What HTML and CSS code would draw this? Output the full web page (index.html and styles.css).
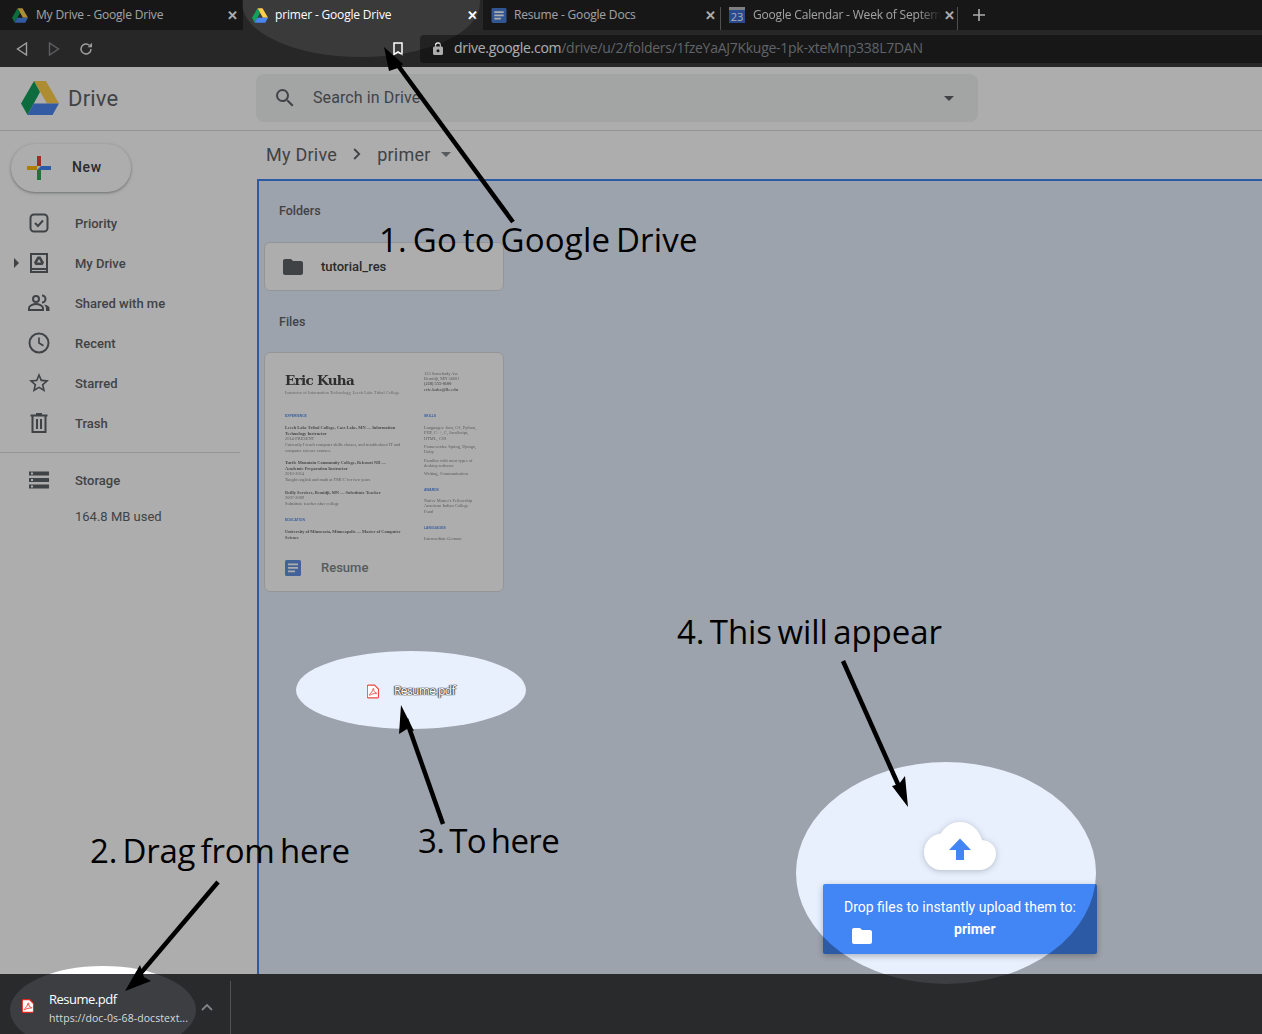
FILE: index.html
```html
<!DOCTYPE html>
<html lang="en">
<head>
<meta charset="utf-8">
<title>primer - Google Drive</title>
<link rel="stylesheet" href="styles.css">
</head>
<body>
<svg class="defs" width="0" height="0" aria-hidden="true">
  <defs>
    <symbol id="drive" viewBox="0 0 38 34">
      <path fill="#ffcf4a" d="M13 0h12l13 22.5H26z"/>
      <path fill="#12a05c" d="M13 0l6 11L6.500 34 0 22.500z"/>
      <path fill="#4a86f0" d="M12.700 22.500H38L31.500 34h-25z"/>
    </symbol>
    <symbol id="pdf" viewBox="0 0 14 16">
      <path fill="#fff" stroke="currentColor" stroke-width="1.300" d="M1.600.6h7.200l4.600 4.600v8.900a1.300 1.300 0 0 1-1.300 1.300H1.600a1.300 1.300 0 0 1-1.300-1.300V1.900A1.300 1.300 0 0 1 1.600.6z"/>
      <path fill="none" stroke="currentColor" stroke-width="1" d="M7 4.800c-.6 2.700-2 5-4.300 6.700-.6.500 0 1.100.7.700 2.400-1.400 5-2 7.500-1.700.8 0 .8-.8 0-.9-2.300-.3-3.500-2.200-3-4.700.1-.6-.8-.7-.9-.1z"/>
    </symbol>
    <symbol id="folder" viewBox="2 4 20 16">
      <path fill="currentColor" d="M10 4H4c-1.100 0-2 .9-2 2v12c0 1.100.9 2 2 2h16c1.100 0 2-.9 2-2V8c0-1.100-.9-2-2-2h-8l-2-2z"/>
    </symbol>
    <symbol id="doc" viewBox="0 0 16 16">
      <rect width="16" height="16" rx="1.500" fill="#4a7fd8"/>
      <path fill="#fff" d="M3 3.500h10v1.800H3zM3 7h10v1.800H3zM3 10.500h7v1.800H3z"/>
    </symbol>
    <mask id="holes" maskUnits="userSpaceOnUse" x="0" y="0" width="1262" height="1034">
      <rect width="1262" height="1034" fill="#fff"/>
      <ellipse cx="361" cy="3" rx="119" ry="54" fill="#000"/>
      <ellipse cx="411" cy="690" rx="115" ry="39" fill="#000"/>
      <ellipse cx="946" cy="873" rx="150" ry="111" fill="#000"/>
      <ellipse cx="103" cy="1010" rx="93" ry="44" fill="#000"/>
    </mask>
  </defs>
</svg>

<div class="page">
  <header class="tabstrip">
    <div class="tab">
      <svg class="favicon"><use href="#drive"/></svg>
      <span class="tab-title">My Drive - Google Drive</span>
      <span class="tab-close">✕</span>
    </div>
    <div class="tab tab-active">
      <svg class="favicon"><use href="#drive"/></svg>
      <span class="tab-title">primer - Google Drive</span>
      <span class="tab-close">✕</span>
    </div>
    <div class="tab tab-sep">
      <svg class="favicon"><use href="#doc"/></svg>
      <span class="tab-title">Resume - Google Docs</span>
      <span class="tab-close">✕</span>
    </div>
    <div class="tab tab-sep tab-cal">
      <span class="cal-icon">23</span>
      <span class="tab-title tab-fade">Google Calendar - Week of Septem</span>
      <span class="tab-close">✕</span>
    </div>
    <span class="new-tab">
      <svg width="12" height="12" viewBox="0 0 12 12"><path fill="none" stroke="currentColor" stroke-width="1.600" d="M6 0v12M0 6h12"/></svg>
    </span>
  </header>

  <nav class="toolbar">
    <svg class="tool" width="12" height="14" viewBox="0 0 12 14"><path fill="none" stroke="#e8eaed" stroke-width="1.400" d="M10.500 1v12L1.500 7z"/></svg>
    <svg class="tool tool-off" width="12" height="14" viewBox="0 0 12 14"><path fill="none" stroke="#8a8c90" stroke-width="1.400" d="M1.500 1v12l9-6z"/></svg>
    <svg class="tool" width="14" height="14" viewBox="0 0 14 14"><path fill="none" stroke="#e8eaed" stroke-width="1.500" d="M12 7a5 5 0 1 1-1.600-3.700"/><path fill="#e8eaed" d="M13 .8v4.400H8.600z"/></svg>
    <svg class="bookmark" width="10" height="14" viewBox="0 0 10 14"><path fill="none" stroke="#fff" stroke-width="1.500" d="M1 1h8v11.500L5 10l-4 2.500z"/></svg>
    <div class="omnibox">
      <svg class="lock" width="10" height="13" viewBox="0 0 10 13"><path fill="#fff" d="M8.500 4.500H8V3.200a3 3 0 0 0-6 0v1.300h-.5C.7 4.500 0 5.200 0 6v5.500C0 12.300.7 13 1.500 13h7c.8 0 1.500-.7 1.500-1.500V6c0-.8-.7-1.500-1.500-1.500zM3.200 3.200a1.800 1.800 0 0 1 3.600 0v1.300H3.200zM5 10.300a1.500 1.500 0 1 1 0-3 1.500 1.500 0 0 1 0 3z"/></svg>
      <span class="url"><span class="url-host">drive.google.com</span>/drive/u/2/folders/1fzeYaAJ7Kkuge-1pk-xteMnp338L7DAN</span>
    </div>
  </nav>

  <div class="app">
    <div class="app-header">
      <div class="brand">
        <svg class="logo"><use href="#drive"/></svg>
        <span class="brand-name">Drive</span>
      </div>
      <div class="search">
        <svg class="search-icon" width="24" height="24" viewBox="0 0 24 24"><path fill="#5f6368" d="M15.500 14h-.79l-.28-.27A6.470 6.470 0 0 0 16 9.500 6.500 6.500 0 1 0 9.500 16c1.610 0 3.090-.59 4.230-1.570l.27.28v.79l5 4.990L20.490 19l-4.990-5zm-6 0C7.010 14 5 11.990 5 9.500S7.010 5 9.500 5 14 7.010 14 9.500 11.990 14 9.500 14z"/></svg>
        <span class="search-text">Search in Drive</span>
        <span class="caret search-caret"></span>
      </div>
    </div>

    <div class="app-body">
      <aside class="sidebar">
        <button class="new-btn">
          <svg width="24" height="24" viewBox="0 0 24 24">
            <path fill="#ea4335" d="M10 0h4v10h-4z"/>
            <path fill="#4285f4" d="M14 10h10v4H14z"/>
            <path fill="#34a853" d="M10 14h4v10h-4z"/>
            <path fill="#fbbc05" d="M0 10h10v4H0z"/>
            <path fill="#4285f4" d="M10 14l4-4v4z"/>
          </svg>
          <span>New</span>
        </button>
        <ul class="nav">
          <li class="nav-item">
            <svg class="nav-icon" viewBox="0 0 24 24"><rect x="3.500" y="3.500" width="17" height="17" rx="3.500" fill="none" stroke="#5f6368" stroke-width="2"/><path fill="none" stroke="#5f6368" stroke-width="2" d="M8 12l3 3 5-5.500"/></svg>
            <span>Priority</span>
          </li>
          <li class="nav-item">
            <span class="nav-arrow"></span>
            <svg class="nav-icon" viewBox="0 0 24 24"><path fill="#5f6368" d="M3 2h18v20H3zm2 2v13h14V4zm0 15v1h14v-1z"/><path fill="#5f6368" d="M10.500 5.500h3l3.500 6-1.500 2.500h-7L7 11.500zm1.500 2.500l-2 3.500h4z"/></svg>
            <span>My Drive</span>
          </li>
          <li class="nav-item">
            <svg class="nav-icon" viewBox="0 0 24 24"><circle cx="9" cy="8" r="3" fill="none" stroke="#5f6368" stroke-width="2"/><path fill="none" stroke="#5f6368" stroke-width="2" d="M2 19v-2c0-2.500 4.500-4 7-4s7 1.500 7 4v2z"/><path fill="none" stroke="#5f6368" stroke-width="2" d="M15 4.500a3.500 3.500 0 0 1 0 7"/><path fill="#5f6368" d="M17 13.500c2.500.5 5.500 1.500 5.500 3.500v3h-3.500v-3c0-1.300-1.200-2.500-2-3.500z"/></svg>
            <span>Shared with me</span>
          </li>
          <li class="nav-item">
            <svg class="nav-icon" viewBox="0 0 24 24"><circle cx="12" cy="12" r="9.500" fill="none" stroke="#5f6368" stroke-width="2"/><path fill="none" stroke="#5f6368" stroke-width="1.700" d="M12 6.500V12l4.500 2.700"/></svg>
            <span>Recent</span>
          </li>
          <li class="nav-item">
            <svg class="nav-icon" viewBox="0 0 24 24"><path fill="#5f6368" d="M22 9.240l-7.190-.62L12 2 9.190 8.630 2 9.240l5.460 4.730L5.820 21 12 17.270 18.180 21l-1.630-7.030L22 9.240zM12 15.400l-3.760 2.270 1-4.280-3.320-2.880 4.380-.38L12 6.100l1.710 4.040 4.380.38-3.320 2.880 1 4.280L12 15.400z"/></svg>
            <span>Starred</span>
          </li>
          <li class="nav-item">
            <svg class="nav-icon" viewBox="0 0 24 24"><path fill="#5f6368" d="M9 2h6v1.500h5.500v2h-1V22h-15V5.500h-1v-2H9zM6.500 5.500V20h11V5.500zM9 8h2v10H9zm4 0h2v10h-2z"/></svg>
            <span>Trash</span>
          </li>
        </ul>
        <div class="side-divider"></div>
        <div class="nav-item storage">
          <svg class="nav-icon" viewBox="0 0 24 24"><path fill="#5f6368" d="M2 20.500h20v-4H2zm2-3h2v2H4zM2 3.500v4h20v-4zm4 3H4v-2h2zM2 14h20v-4H2zm2-3h2v2H4z"/></svg>
          <span>Storage</span>
        </div>
        <div class="used">164.8 MB used</div>
      </aside>

      <main class="content">
        <div class="crumbs">
          <span>My Drive</span>
          <svg class="crumb-chevron" width="8" height="12" viewBox="0 0 8 12"><path fill="none" stroke="#5f6368" stroke-width="1.800" d="M1.200 1l5 5-5 5"/></svg>
          <span>primer</span>
          <span class="caret crumb-caret"></span>
        </div>
        <section class="pane">
          <h2 class="section-title">Folders</h2>
          <div class="folder-card">
            <svg class="folder-icon"><use href="#folder"/></svg>
            <span>tutorial_res</span>
          </div>
          <h2 class="section-title files-title">Files</h2>
          <div class="file-card">
            <div class="preview">
              <div class="pv-left">
                <div class="pv-name">Eric Kuha</div>
                <div class="pv-sub">Instructor of Information Technology, Leech Lake Tribal College</div>
                <div class="pv-head pv-first">EXPERIENCE</div>
                <div class="pv-strong">Leech Lake Tribal College, Cass Lake, MN — Information<br>Technology Instructor</div>
                <div class="pv-text">2014-PRESENT</div>
                <div class="pv-text">Currently I teach computer skills classes, and troubleshoot IT and<br>computer science courses.</div>
                <div class="pv-strong pv-gap">Turtle Mountain Community College, Belcourt ND —<br>Academic Preparation Instructor</div>
                <div class="pv-text">2010-2014</div>
                <div class="pv-text">Taught english and math at TMCC for two years</div>
                <div class="pv-strong pv-gap">Reilly Services, Bemidji, MN — Substitute Teacher</div>
                <div class="pv-text">2007-2009</div>
                <div class="pv-text">Substitute teacher after college</div>
                <div class="pv-head pv-edu">EDUCATION</div>
                <div class="pv-strong">University of Minnesota, Minneapolis — Master of Computer<br>Science</div>
              </div>
              <div class="pv-right">
                <div class="pv-contact">123 Somebody Ave<br>Bemidji, MN 56601<br><b>(218) 555-0100</b><br><b>eric.kuha@llc.edu</b></div>
                <div class="pv-head pv-skills">SKILLS</div>
                <div class="pv-text">Languages: Java, C#, Python,<br>PHP, C++, C, JavaScript,<br>HTML, CSS</div>
                <div class="pv-text pv-fw">Frameworks: Spring, Django,<br>Unity</div>
                <div class="pv-text pv-fam">Familiar with most types of<br>desktop software</div>
                <div class="pv-text pv-wr">Writing, Communication</div>
                <div class="pv-head pv-awards">AWARDS</div>
                <div class="pv-text">Native Master's Fellowship<br>American Indian College<br>Fund</div>
                <div class="pv-head pv-lang">LANGUAGES</div>
                <div class="pv-text">Intermediate German</div>
              </div>
            </div>
            <div class="file-foot">
              <svg class="doc-icon"><use href="#doc"/></svg>
              <span>Resume</span>
            </div>
          </div>
        </section>
      </main>
    </div>
  </div>

  <footer class="download-bar">
    <svg class="dl-icon"><use href="#pdf"/></svg>
    <div class="dl-info">
      <div class="dl-name">Resume.pdf</div>
      <div class="dl-url">https://doc-0s-68-docstext...</div>
    </div>
    <svg class="dl-chevron" width="12" height="7" viewBox="0 0 12 7"><path fill="none" stroke="#bdc1c6" stroke-width="1.800" d="M1 6l5-5 5 5"/></svg>
    <span class="dl-sep"></span>
  </footer>
</div>

<div class="upload-widget">
  <svg class="cloud" width="72" height="48" viewBox="0 0 72 48">
    <path fill="#fff" d="M58 18.100C55.300 7.700 46.400 0 36 0 27.700 0 20.500 4.700 16.900 11.600 7.400 12.600 0 20.600 0 30.400 0 40.100 7.900 48 17.500 48h37.900C64.600 48 72 40.600 72 31.500c0-7-5.700-12.800-14-13.400z"/>
    <path fill="#4285f4" d="M36 16.500L47 28h-7v10h-8V28h-7z"/>
  </svg>
  <div class="upload-card">
    <p class="upload-line">Drop files to instantly upload them to:</p>
    <div class="upload-target">
      <svg class="upload-folder"><use href="#folder"/></svg>
      <strong>primer</strong>
    </div>
  </div>
</div>

<svg class="dim" width="1262" height="1034" viewBox="0 0 1262 1034" aria-hidden="true">
  <rect width="1262" height="1034" fill="#000" fill-opacity=".32" mask="url(#holes)"/>
  <g fill="none" stroke="#000" stroke-width="4.500">
    <path d="M513 222L394 60"/>
    <path d="M218 882L134 981"/>
    <path d="M443 824L406 719"/>
    <path d="M843 661L901 791"/>
  </g>
  <g fill="#000">
    <path d="M384 47L403 64 398 68 389 71z"/>
    <path d="M125 991L140 965 144 977 151 981z"/>
    <path d="M401 705L414 731 407 729 399 734z"/>
    <path d="M908 807L892 786 899 784 905 776z"/>
  </g>
</svg>

<div class="ghost">
  <svg class="ghost-icon"><use href="#pdf"/></svg>
  <span>Resume.pdf</span>
</div>

<p class="note note-1">1. Go to Google Drive</p>
<p class="note note-2">2. Drag from here</p>
<p class="note note-3">3. To here</p>
<p class="note note-4">4. This will appear</p>
</body>
</html>
```

FILE: styles.css
```css
* { box-sizing: border-box; }

html, body {
  margin: 0;
  height: 1034px;
  overflow: hidden;
}

body {
  position: relative;
  font-family: Roboto, "Liberation Sans", sans-serif;
  background: #fff;
}

.defs { position: absolute; }

.page {
  display: flex;
  flex-direction: column;
  width: 1262px;
  height: 1034px;
}

/* browser tabs */
.tabstrip {
  display: flex;
  align-items: stretch;
  flex: 0 0 30px;
  background: #222;
  color: #eceef0;
  font: 12px/30px "Open Sans", sans-serif;
}

.tab {
  display: flex;
  align-items: center;
  flex: 0 0 243px;
  min-width: 0;
  padding: 0 5px 0 12px;
  position: relative;
}

.tab-active {
  flex-basis: 240px;
  padding-left: 9px;
  background: #3a3a3a;
  color: #fff;
}

.tab-sep { flex-basis: 238px; padding-left: 8px; }

.tab-cal { flex-basis: 237px; }

.tab-sep::after {
  content: "";
  position: absolute;
  right: 0;
  top: 7px;
  bottom: 0;
  width: 1px;
  background: #777;
}

.favicon {
  flex: none;
  width: 16px;
  height: 15px;
  margin-right: 8px;
}

.tab-active .favicon { margin-right: 7px; }

.tab-sep .favicon { margin-right: 7px; }

.tab-title {
  flex: 1;
  min-width: 0;
  white-space: nowrap;
  overflow: hidden;
  letter-spacing: -.18px;
}

.tab-fade {
  flex: 0 0 auto;
  -webkit-mask-image: linear-gradient(to right, #000 88%, transparent 100%);
  mask-image: linear-gradient(to right, #000 88%, transparent 100%);
}

.tab-close {
  flex: none;
  width: 12px;
  font-size: 13px;
  font-weight: 700;
  text-align: center;
  color: #fff;
}

.tab-cal .tab-close { margin-left: auto; margin-right: -2px; }

.cal-icon {
  flex: none;
  width: 16px;
  height: 16px;
  margin-right: 8px;
  border-top: 3px solid #bbb;
  background: #3a6fd0;
  color: #fff;
  font: 11px/13px "Open Sans", sans-serif;
  text-align: center;
}

.new-tab {
  display: flex;
  align-items: center;
  margin-left: 15px;
  color: #fff;
}

/* browser toolbar */
.toolbar {
  display: flex;
  align-items: center;
  flex: 0 0 37px;
  padding-left: 16px;
  background: #3a3a3a;
}

.tool { flex: none; margin-right: 20px; }

.tool-off { margin-right: 19px; }

.bookmark { margin-left: 280px; flex: none; margin-right: 17px; }

.omnibox {
  display: flex;
  align-items: center;
  flex: 1;
  height: 28px;
  padding-left: 13px;
  border-radius: 4px 0 0 4px;
  background: #222;
}

.lock { flex: none; margin-right: 11px; }

.url {
  margin-bottom: 2px;
  font: 14px/26px "Open Sans", sans-serif;
  letter-spacing: -.27px;
  color: #8f949a;
  white-space: nowrap;
}

.url-host { color: #fff; }

/* drive */
.app {
  display: flex;
  flex-direction: column;
  flex: 1;
  min-height: 0;
  background: #fff;
}

.app-header {
  display: flex;
  align-items: center;
  flex: 0 0 64px;
  padding-bottom: 1px;
  border-bottom: 1px solid #dadce0;
}

.brand {
  display: flex;
  align-items: center;
  flex: 0 0 235px;
  margin-left: 21px;
  color: #5f6368;
}

.logo { width: 38px; height: 34px; margin-right: 9px; }

.brand-name { font-size: 22px; letter-spacing: .2px; }

.search {
  display: flex;
  align-items: center;
  width: 722px;
  height: 48px;
  padding: 0 24px 0 17px;
  border-radius: 8px;
  background: #f1f3f4;
  color: #5f6368;
}

.search-text {
  flex: 1;
  margin-left: 16px;
  padding-bottom: 2px;
  font-size: 16px;
  letter-spacing: .1px;
}

.caret {
  display: inline-block;
  border-style: solid;
  border-width: 5px 5px 0;
  border-color: #5f6368 transparent transparent;
}

.app-body {
  display: flex;
  flex: 1;
  min-height: 0;
}

.sidebar {
  flex: 0 0 257px;
  padding-top: 13px;
  color: #5f6368;
}

.new-btn {
  display: flex;
  align-items: center;
  width: 120px;
  height: 48px;
  margin-left: 11px;
  padding: 0 0 0 16px;
  border: 0;
  border-radius: 24px;
  background: #fff;
  box-shadow: 0 1px 2px rgba(60,64,67,.3), 0 1px 3px 1px rgba(60,64,67,.15);
  color: #3c4043;
  font: 500 14px Roboto, sans-serif;
  letter-spacing: .6px;
}

.new-btn span { margin: 0 0 2px 21px; }

.nav {
  list-style: none;
  margin: 11px 0 0;
  padding: 0;
}

.nav-item {
  display: flex;
  align-items: center;
  position: relative;
  height: 40px;
  padding-left: 27px;
  font-size: 13px;
  font-weight: 500;
}

.nav-icon {
  flex: none;
  width: 24px;
  height: 24px;
  margin-right: 24px;
}

.nav-arrow {
  position: absolute;
  left: 14px;
  top: 15px;
  border-style: solid;
  border-width: 5px 0 5px 5px;
  border-color: transparent transparent transparent #5f6368;
}

.side-divider {
  width: 240px;
  height: 1px;
  margin-top: 9px;
  background: #dadce0;
}

.storage { margin-top: 7px; }

.used {
  margin-top: 7px;
  padding-left: 75px;
  font-size: 13px;
  line-height: 20px;
}

.content {
  display: flex;
  flex-direction: column;
  flex: 1;
  min-width: 0;
}

.crumbs {
  display: flex;
  align-items: center;
  flex: 0 0 48px;
  padding: 0 0 2px 9px;
  color: #5f6368;
  font-size: 18px;
  letter-spacing: .25px;
}

.crumb-chevron { margin: 0 16px 0 16px; }

.crumb-caret { margin-left: 10px; border-top-color: #80868b; }

.pane {
  flex: 1;
  border-top: 2px solid #4285f4;
  border-left: 2px solid #4285f4;
  background: #e8f0fe;
  padding: 20px 0 0 5px;
}

.section-title {
  margin: 0 0 0 15px;
  color: #5f6368;
  font-size: 12.500px;
  line-height: 20px;
  font-weight: 500;
}

.files-title { margin-top: 21px; }

.folder-card {
  display: flex;
  align-items: center;
  width: 240px;
  height: 49px;
  margin-top: 21px;
  padding-left: 18px;
  border: 1px solid #dadce0;
  border-radius: 6px;
  background: #fff;
  color: #3c4043;
  font-size: 13px;
  font-weight: 500;
}

.folder-icon {
  width: 20px;
  height: 16px;
  margin-right: 18px;
  color: #5f6368;
}

.file-card {
  display: flex;
  flex-direction: column;
  width: 240px;
  height: 240px;
  margin-top: 20px;
  border: 1px solid #dadce0;
  border-radius: 6px;
  background: #fff;
  color: #5f6368;
}

.preview {
  display: grid;
  grid-template-columns: 128px 62px;
  column-gap: 11px;
  flex: 1;
  min-height: 0;
  padding: 18px 0 0 20px;
  overflow: hidden;
  filter: blur(.5px);
  font-family: "Liberation Serif", serif;
  font-size: 4.400px;
  line-height: 5.600px;
  color: #8a8a8a;
  white-space: nowrap;
}

.pv-name {
  color: #444;
  font: 700 13.500px/18px "DejaVu Serif", serif;
  letter-spacing: -.7px;
}

.pv-sub { margin-top: 1.200px; color: #999; }

.pv-head { color: #5a8fe8; font-family: "Liberation Sans", sans-serif; font-size: 3.400px; font-weight: 700; }

.pv-first { margin-top: 18.400px; margin-bottom: 5.400px; }

.pv-strong { color: #707070; font-weight: 700; }

.pv-text { color: #8a8a8a; }

.pv-gap { margin-top: 7px; }

.pv-edu { margin-top: 11.600px; margin-bottom: 5.500px; }

.pv-contact { line-height: 5.200px; }

.pv-skills { margin-top: 22.400px; margin-bottom: 5px; }

.pv-fw { margin-top: 2px; }

.pv-fam { margin-top: 2.800px; }

.pv-wr { margin-top: 1.800px; }

.pv-awards { margin-top: 11.400px; margin-bottom: 4.400px; }

.pv-lang { margin-top: 12.200px; margin-bottom: 4.400px; }

.file-foot {
  display: flex;
  align-items: center;
  flex: 0 0 39px;
  padding: 0 0 8px 20px;
  color: #80868b;
  font-size: 13px;
  font-weight: 500;
}

.doc-icon {
  width: 16px;
  height: 16px;
  margin-right: 20px;
  opacity: .85;
}

/* download shelf */
.download-bar {
  display: flex;
  align-items: center;
  flex: 0 0 60px;
  padding-left: 22px;
  background: #3c3e42;
  color: #fff;
}

.dl-icon {
  width: 12px;
  height: 14px;
  margin: 4px 15px 0 0;
  color: #e8281e;
}

.dl-info { width: 139px; padding-top: 10px; }

.dl-name {
  font: 13px/16px "Open Sans", sans-serif;
  letter-spacing: -.5px;
}

.dl-url {
  margin-top: 2px;
  font: 10.500px/19px "Open Sans", sans-serif;
  letter-spacing: .08px;
  color: #d8dadd;
  white-space: nowrap;
}

.dl-chevron { margin: 6px 0 0 13px; }

.dl-sep {
  width: 1px;
  height: 53px;
  margin: 7px 0 0 17px;
  background: #7a7b7e;
}

/* overlays */
.upload-widget {
  position: absolute;
  left: 823px;
  top: 822px;
  width: 274px;
  color: #fff;
}

.cloud {
  display: block;
  margin-left: 101px;
  filter: drop-shadow(0 1px 3px rgba(60,64,67,.3));
}

.upload-card {
  height: 70px;
  margin-top: 14px;
  padding: 14px 21px 0;
  border-radius: 2px;
  background: #4285f4;
  box-shadow: 0 2px 6px rgba(60,64,67,.35);
  font-size: 14px;
}

.upload-line {
  margin: 0;
  line-height: 18px;
  white-space: nowrap;
}

.upload-target {
  display: flex;
  margin-top: 4px;
  line-height: 18px;
}

.upload-target strong { margin-left: 82px; font-weight: 700; }

.upload-folder {
  width: 20px;
  height: 16px;
  margin: 8px 0 0 8px;
  color: #fff;
}

.dim {
  position: absolute;
  left: 0;
  top: 0;
  pointer-events: none;
}

.ghost {
  position: absolute;
  left: 367px;
  top: 682px;
  display: flex;
  align-items: center;
  gap: 15px;
  color: #fff;
  font: 12px/18px "Open Sans", sans-serif;
  letter-spacing: -.6px;
  text-shadow: 0 0 1px #333, 0 0 1px #333, 1px 0 1px #555, -1px 0 1px #555;
}

.ghost-icon {
  width: 12px;
  height: 15px;
  color: #e9483f;
}

.note {
  position: absolute;
  margin: 0;
  color: #000;
  font: 33px/46px "Open Sans", sans-serif;
  word-spacing: -3px;
  white-space: nowrap;
}

.note-1 { left: 379px; top: 217px; letter-spacing: .2px; }
.note-2 { left: 90px; top: 828px; letter-spacing: -.23px; }
.note-3 { left: 418px; top: 818px; letter-spacing: -.64px; }
.note-4 { left: 677px; top: 609px; letter-spacing: -.08px; }
```
